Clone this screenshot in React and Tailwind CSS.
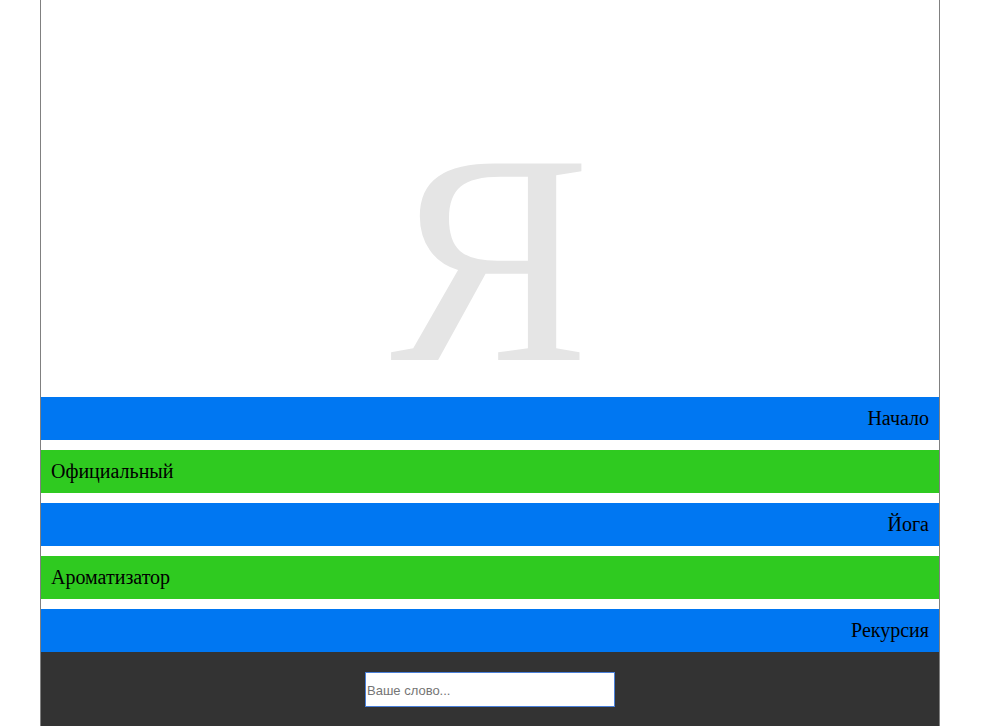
import { useState } from 'react';

const items = [
  { label: 'Начало', color: 'bg-[#0077f2]', align: 'text-right' },
  { label: 'Официальный', color: 'bg-[#2fca20]', align: 'text-left' },
  { label: 'Йога', color: 'bg-[#0077f2]', align: 'text-right' },
  { label: 'Ароматизатор', color: 'bg-[#2fca20]', align: 'text-left' },
  { label: 'Рекурсия', color: 'bg-[#0077f2]', align: 'text-right' },
];

export default function App() {
  const [word, setWord] = useState('');

  return (
    <div className="min-h-[726px] bg-white">
      <div className="mx-[40px] w-[900px] border-x border-[#808080] bg-white">
        {/* big letter */}
        <div className="h-[397px] pt-[124px] text-center">
          <span
            className="block text-[300px] leading-[270px] text-[#e5e5e5] select-none"
            style={{ fontFamily: '"Liberation Serif", "Times New Roman", serif' }}
          >
            Я
          </span>
        </div>

        <div className="flex flex-col gap-[10px]">
          {items.map(item => (
            <div
              key={item.label}
              className={`${item.color} ${item.align} px-[10px] py-[10px] text-[20px] leading-[23px] text-black`}
              style={{ fontFamily: '"Liberation Serif", "Times New Roman", serif' }}
            >
              {item.label}
            </div>
          ))}
        </div>

        {/* footer with search */}
        <div className="flex h-[100px] justify-center bg-[#333333] pt-[20px]">
          <input
            autoFocus
            value={word}
            onChange={e => setWord(e.target.value)}
            placeholder="Ваше слово..."
            className="h-[35px] w-[250px] border border-[#4a80d9] bg-white px-[1px] pt-[2px] text-[13px] text-black outline-none placeholder:text-[#757575]"
            style={{ fontFamily: '"Liberation Sans", Arial, sans-serif' }}
          />
        </div>
      </div>
    </div>
  );
}
